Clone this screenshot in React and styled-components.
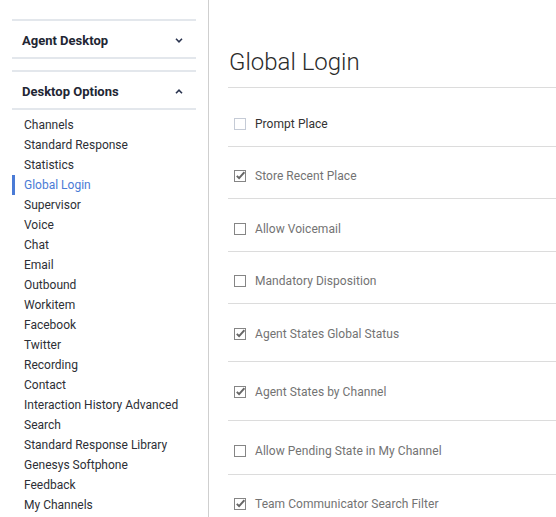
import React from "react";
import styled, { createGlobalStyle } from "styled-components";

const Global = createGlobalStyle`
  html, body { margin: 0; padding: 0; background: #fff; }
  body { font-family: Roboto, "Liberation Sans", Arial, sans-serif; overflow: hidden; }
`;

const Page = styled.div`
  display: grid;
  grid-template-columns: 208px 1px 1fr;
  height: 517px;
  overflow: hidden;
`;

const Sidebar = styled.aside`
  padding: 19px 12px 0 12px;
  display: flex;
  flex-direction: column;
  gap: 11px;
`;

const Divider = styled.div`
  background: #cfcfcf;
`;

const Section = styled.section`
  display: flex;
  flex-direction: column;
`;

const SectionHeader = styled.div`
  display: flex;
  align-items: center;
  justify-content: space-between;
  border-top: 2px solid #e3e7ec;
  border-bottom: 2px solid #e3e7ec;
  height: 34px;
  padding: 2px 13px 0 10px;
  font-size: 13px;
  font-weight: 700;
  color: #222633;
`;

const Menu = styled.ul`
  list-style: none;
  margin: 0;
  padding: 5px 0 0 0;
`;

const MenuItem = styled.li`
  height: 20px;
  line-height: 20px;
  font-size: 12px;
  padding-left: 12px;
  color: ${(p) => (p.$active ? "#4a7bd6" : "#2d2f36")};
  box-shadow: ${(p) => (p.$active ? "inset 3px 0 0 #4a7bd6" : "none")};
  white-space: nowrap;
`;

const Main = styled.main`
  padding: 48px 0 0 19px;
`;

const Title = styled.h1`
  margin: 0;
  padding: 0 0 11px 1px;
  font-size: 24px;
  line-height: 28px;
  font-weight: 300;
  color: #2b2b2b;
  border-bottom: 1px solid #dcdcdc;
`;

const Row = styled.div`
  box-sizing: border-box;
  height: ${(p) => p.$h}px;
  padding-top: ${(p) => p.$pt}px;
  padding-left: 6px;
  border-bottom: 1px solid #dcdcdc;
  display: flex;
  align-items: flex-start;
  gap: 9px;
`;

const Label = styled.span`
  font-size: 12px;
  line-height: 16px;
  letter-spacing: 0.05px;
  color: ${(p) => (p.$dark ? "#333" : "#737373")};
  white-space: nowrap;
`;

const Box = styled.span`
  box-sizing: border-box;
  width: 12px;
  height: 12px;
  margin-top: 2px;
  border: 1px solid ${(p) => (p.$light ? "#c5cbd6" : "#858585")};
  display: flex;
  align-items: center;
  justify-content: center;
  flex: none;
`;

const Chevron = ({ up }) => (
  <svg width="8" height="5" viewBox="0 0 8 5">
    <path
      d={up ? "M1 4.2 L4 1.2 L7 4.2" : "M1 0.8 L4 3.8 L7 0.8"}
      fill="none"
      stroke="#2b3550"
      strokeWidth="1.6"
    />
  </svg>
);

const Check = () => (
  <svg width="10" height="10" viewBox="0 0 10 10">
    <path d="M1.8 4.8 L4.1 7.2 L9.4 1.2" fill="none" stroke="#666" strokeWidth="1.9" />
  </svg>
);

const items = [
  "Channels",
  "Standard Response",
  "Statistics",
  "Global Login",
  "Supervisor",
  "Voice",
  "Chat",
  "Email",
  "Outbound",
  "Workitem",
  "Facebook",
  "Twitter",
  "Recording",
  "Contact",
  "Interaction History Advanced",
  "Search",
  "Standard Response Library",
  "Genesys Softphone",
  "Feedback",
  "My Channels",
];

const options = [
  { label: "Prompt Place", checked: false, h: 59, pt: 28, dark: true },
  { label: "Store Recent Place", checked: true, h: 52, pt: 21 },
  { label: "Allow Voicemail", checked: false, h: 53, pt: 22 },
  { label: "Mandatory Disposition", checked: false, h: 52, pt: 21 },
  { label: "Agent States Global Status", checked: true, h: 58, pt: 22 },
  { label: "Agent States by Channel", checked: true, h: 59, pt: 22 },
  { label: "Allow Pending State in My Channel", checked: false, h: 54, pt: 22 },
  { label: "Team Communicator Search Filter", checked: true, h: 54, pt: 21 },
];

export default function App() {
  return (
    <>
      <Global />
      <Page>
        <Sidebar>
          <Section>
            <SectionHeader>
              <span>Agent Desktop</span>
              <Chevron />
            </SectionHeader>
          </Section>
          <Section>
            <SectionHeader>
              <span>Desktop Options</span>
              <Chevron up />
            </SectionHeader>
            <Menu>
              {items.map((it) => (
                <MenuItem key={it} $active={it === "Global Login"}>
                  {it}
                </MenuItem>
              ))}
            </Menu>
          </Section>
        </Sidebar>
        <Divider />
        <Main>
          <Title>Global Login</Title>
          {options.map((o) => (
            <Row key={o.label} $h={o.h} $pt={o.pt}>
              <Box $light={o.dark}>{o.checked && <Check />}</Box>
              <Label $dark={o.dark}>{o.label}</Label>
            </Row>
          ))}
        </Main>
      </Page>
    </>
  );
}
